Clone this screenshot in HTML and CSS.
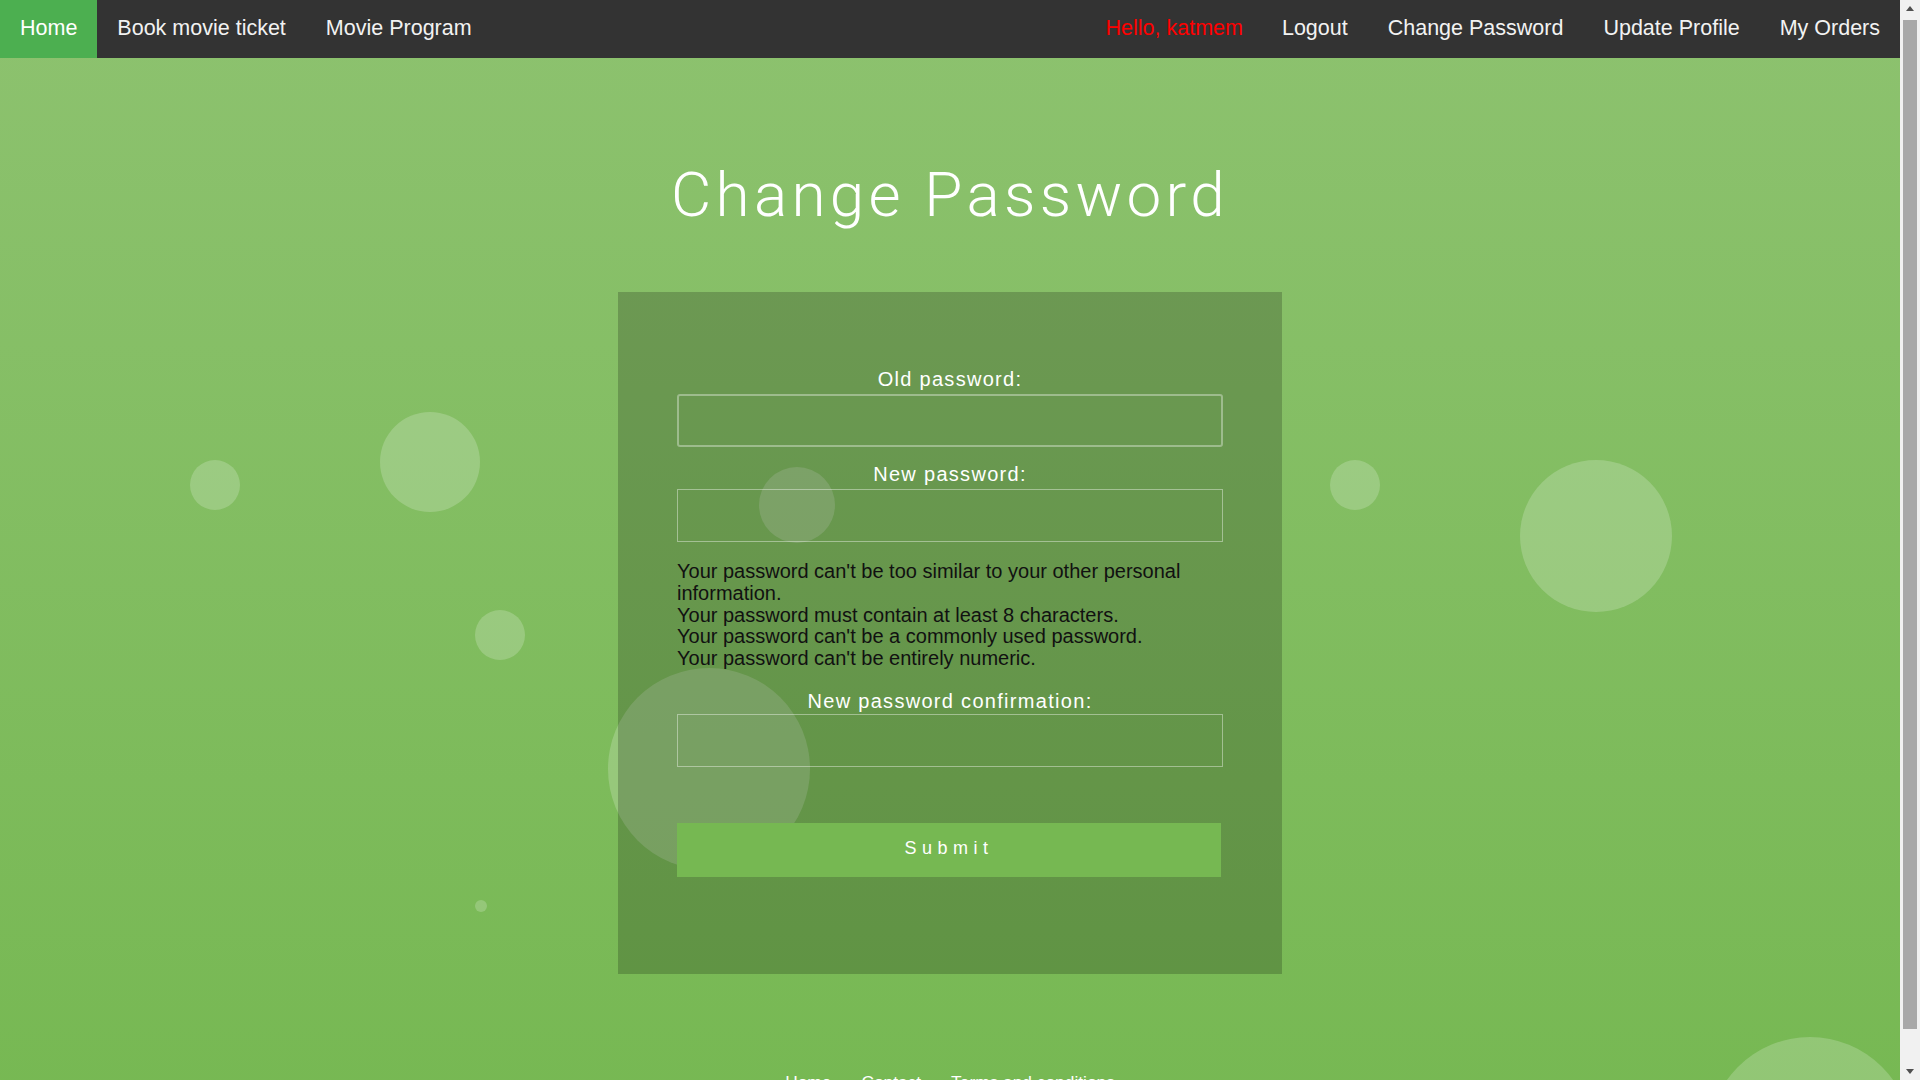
FILE: index.html
```html
<!DOCTYPE html>
<html lang="en">
<head>
<meta charset="utf-8">
<title>Change Password</title>
<link rel="stylesheet" href="styles.css">
</head>
<body>
<nav class="topnav">
  <div class="nav-left">
    <a class="nav-item nav-item--active" href="#">Home</a>
    <a class="nav-item" href="#">Book movie ticket</a>
    <a class="nav-item" href="#">Movie Program</a>
  </div>
  <div class="nav-right">
    <span class="nav-item nav-hello">Hello, katmem</span>
    <a class="nav-item" href="#">Logout</a>
    <a class="nav-item" href="#">Change Password</a>
    <a class="nav-item" href="#">Update Profile</a>
    <a class="nav-item" href="#">My Orders</a>
  </div>
</nav>

<ul class="bubbles">
  <li class="bubble b1"></li>
  <li class="bubble b2"></li>
  <li class="bubble b3"></li>
  <li class="bubble b4"></li>
  <li class="bubble b5"></li>
  <li class="bubble b6"></li>
  <li class="bubble b7"></li>
  <li class="bubble b8"></li>
  <li class="bubble b9"></li>
</ul>

<main class="content">
  <h1 class="title">Change Password</h1>
  <form class="card" action="#">
    <label class="field-label" for="id_old_password">Old password:</label>
    <input class="field-input field-input--active" type="password" id="id_old_password">
    <label class="field-label" for="id_new_password1">New password:</label>
    <input class="field-input" type="password" id="id_new_password1">
    <div class="help">
      <div>Your password can't be too similar to your other personal information.</div>
      <div>Your password must contain at least 8 characters.</div>
      <div>Your password can't be a commonly used password.</div>
      <div>Your password can't be entirely numeric.</div>
    </div>
    <label class="field-label field-label--after-help" for="id_new_password2">New password confirmation:</label>
    <input class="field-input field-input--tight" type="password" id="id_new_password2">
    <button class="submit" type="button">Submit</button>
  </form>
  <footer class="footer">
    <a class="footer-link" href="#">Home</a>
    <a class="footer-link" href="#">Contact</a>
    <a class="footer-link" href="#">Terms and conditions</a>
  </footer>
</main>

<div class="scrollbar" aria-hidden="true">
  <span class="scrollbar-arrow scrollbar-arrow--up"></span>
  <span class="scrollbar-thumb"></span>
  <span class="scrollbar-arrow scrollbar-arrow--down"></span>
</div>
</body>
</html>
```

FILE: styles.css
```css
html {
  margin: 0;
  padding: 0;
}

body {
  margin: 0 20px 0 0;
  padding: 0;
  position: relative;
  font-family: "Liberation Sans", Arial, sans-serif;
  background: linear-gradient(to top, #76b852, #8dc26f);
  min-height: 1125px;
}

/* ---------- navigation ---------- */
.topnav {
  position: relative;
  z-index: 2;
  display: flex;
  justify-content: space-between;
  background-color: #333333;
  height: 58px;
}

.nav-left,
.nav-right {
  display: flex;
}

.nav-item {
  display: block;
  padding: 16px 20px 18px;
  font-size: 21.5px;
  line-height: 24px;
  color: #f2f2f2;
  text-decoration: none;
  white-space: nowrap;
}

.nav-item--active {
  background-color: #4caf50;
  color: #ffffff;
}

.nav-hello {
  color: #ff0000;
  padding-left: 16px;
  padding-right: 19px;
}

/* ---------- background bubbles ---------- */
.bubbles {
  position: absolute;
  top: 0;
  left: 0;
  width: 100%;
  height: 100%;
  margin: 0;
  padding: 0;
  list-style: none;
  overflow: hidden;
  z-index: 0;
  pointer-events: none;
}

.bubble {
  position: absolute;
  display: block;
  border-radius: 50%;
  background: rgba(255, 255, 255, 0.2);
}

.b1 { left: 190px;  top: 460px;  width: 50px;  height: 50px; }
.b2 { left: 380px;  top: 412px;  width: 100px; height: 100px; }
.b3 { left: 475px;  top: 610px;  width: 50px;  height: 50px; }
.b4 { left: 759px;  top: 467px;  width: 76px;  height: 76px; }
.b5 { left: 608px;  top: 668px;  width: 202px; height: 202px; }
.b6 { left: 475px;  top: 900px;  width: 12px;  height: 12px; }
.b7 { left: 1330px; top: 460px;  width: 50px;  height: 50px; }
.b8 { left: 1520px; top: 460px;  width: 152px; height: 152px; }
.b9 { left: 1708px; top: 1037px; width: 204px; height: 204px; }

/* ---------- main content ---------- */
.content {
  position: relative;
  z-index: 1;
}

.title {
  margin: 100px 0 61px;
  text-align: center;
  font-family: Roboto, "Liberation Sans", sans-serif;
  font-weight: 300;
  font-size: 62px;
  line-height: 73px;
  letter-spacing: 4.3px;
  color: #ffffff;
}

.card {
  box-sizing: border-box;
  width: 664px;
  margin: 0 auto;
  padding: 76px 59px 97px;
  background-color: rgba(0, 0, 0, 0.2);
}

.field-label {
  display: block;
  text-align: center;
  font-size: 20px;
  line-height: 23px;
  letter-spacing: 1.3px;
  color: #ffffff;
}

.field-label--after-help {
  margin-top: 20px;
}

.field-input {
  display: block;
  box-sizing: border-box;
  width: 546px;
  height: 53px;
  margin: 3px 0 16px;
  padding: 0 12px;
  border: 1px solid rgba(255, 255, 255, 0.4);
  border-radius: 0;
  background: transparent;
  color: #ffffff;
  font-size: 18px;
  font-family: "Liberation Sans", Arial, sans-serif;
  outline: none;
}

.field-input--active {
  border: 2px solid rgba(255, 255, 255, 0.35);
  border-radius: 3px;
}

.field-input--tight {
  margin-top: 1px;
}

.help {
  margin-top: 19px;
  font-size: 20px;
  line-height: 21.8px;
  color: #111111;
}

.submit {
  display: block;
  box-sizing: border-box;
  width: 544px;
  height: 54px;
  margin: 56.5px 0 0;
  padding: 0 0 4px;
  border: none;
  background-color: #76b852;
  color: #ffffff;
  font-family: "Liberation Sans", Arial, sans-serif;
  font-size: 18px;
  letter-spacing: 5.5px;
  cursor: pointer;
}

.footer {
  display: flex;
  justify-content: center;
  gap: 30px;
  margin-top: 99px;
  padding-bottom: 30px;
}

.footer-link {
  font-size: 17.33px;
  line-height: 19px;
  color: #ffffff;
  text-decoration: none;
}

/* ---------- drawn window scrollbar ---------- */
.scrollbar {
  position: fixed;
  top: 0;
  right: 0;
  bottom: 0;
  z-index: 5;
  width: 20px;
  background-color: #f1f1f1;
}

.scrollbar-thumb {
  position: absolute;
  top: 20px;
  left: 3px;
  right: 3px;
  height: 1009px;
  background-color: #a8a8a8;
}

.scrollbar-arrow {
  position: absolute;
  left: 6px;
  width: 0;
  height: 0;
  border-left: 4px solid transparent;
  border-right: 4px solid transparent;
}

.scrollbar-arrow--up {
  top: 6px;
  border-bottom: 5px solid #505050;
}

.scrollbar-arrow--down {
  bottom: 6px;
  border-top: 5px solid #505050;
}
```
